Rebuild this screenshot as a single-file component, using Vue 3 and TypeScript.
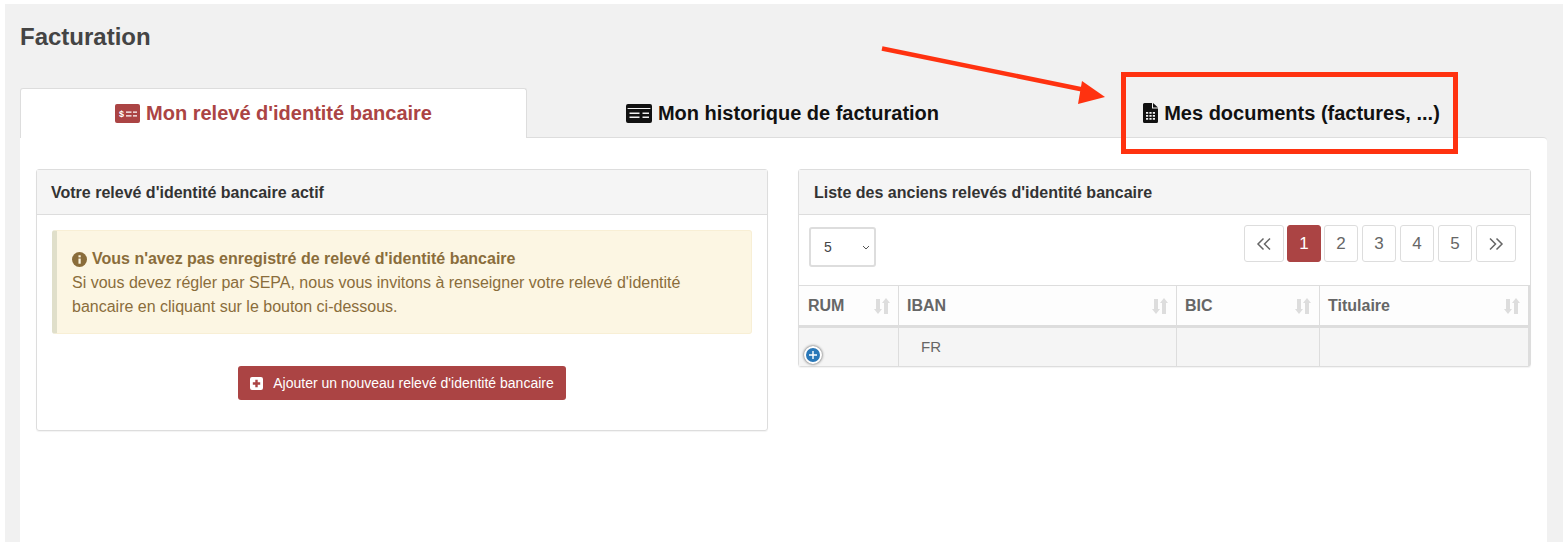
<script setup lang="ts">
interface Column { label: string; cls: string; value: string }
const columns: Column[] = [
  { label: 'RUM', cls: 'c-rum', value: '' },
  { label: 'IBAN', cls: 'c-iban', value: 'FR' },
  { label: 'BIC', cls: 'c-bic', value: '' },
  { label: 'Titulaire', cls: 'c-tit', value: '' },
]
const pages = [1, 2, 3, 4, 5]
</script>

<template>
  <div class="page">
    <main class="shell">
      <h1 class="title">Facturation</h1>

      <nav class="tabs">
        <a class="tab active">
          <svg class="ico" width="25" height="19" viewBox="0 0 25 19">
            <path fill="currentColor" d="M2 0h21a2 2 0 0 1 2 2v15a2 2 0 0 1-2 2H2a2 2 0 0 1-2-2V2a2 2 0 0 1 2-2z" />
            <path fill="none" stroke="#fff" stroke-width="1.3" d="M11 8.2h5.500M18 8.2h4M11 11.8h5.500M18 11.8h4" />
            <text x="4" y="13" class="dollar">$</text>
          </svg>
          Mon relevé d'identité bancaire
        </a>
        <a class="tab">
          <svg class="ico" width="26" height="19" viewBox="0 0 26 19">
            <path fill="currentColor" fill-rule="evenodd" d="M2 0h22a2 2 0 0 1 2 2v15a2 2 0 0 1-2 2H2a2 2 0 0 1-2-2V2a2 2 0 0 1 2-2zM1.600 4v.9h22.800V4zM3.500 8.500v1.600h10V8.500zM3.500 12.500v1.600h10v-1.600zM16.500 8.500v1.600h6.500V8.500zM16.500 12.500v1.600h6.500v-1.600z" />
          </svg>
          Mon historique de facturation
        </a>
        <a class="tab">
          <svg class="ico" width="15" height="20" viewBox="0 0 15 20">
            <path fill="currentColor" fill-rule="evenodd" d="M1.500 0H9v5.500h6v13a1.500 1.500 0 0 1-1.500 1.500h-12A1.500 1.500 0 0 1 0 18.500v-17A1.500 1.500 0 0 1 1.500 0zM3 9v1.800h2.200V9zM6.400 9v1.800h2.200V9zM9.800 9v1.800H12V9zM3 12v1.800h2.200V12zM6.400 12v1.800h2.200V12zM9.800 12v1.800H12V12zM3 15v1.800h2.200V15zM6.400 15v1.800h2.200V15zM9.800 15v1.800H12V15z" />
            <path fill="currentColor" d="M10 0l5 4.600h-5z" />
          </svg>
          Mes documents (factures, ...)
        </a>
      </nav>

      <section class="content">
        <article class="panel">
          <header class="panel-head">Votre relevé d'identité bancaire actif</header>
          <div class="panel-body">
            <div class="alert">
              <strong class="alert-title">
                <svg width="15" height="15" viewBox="0 0 16 16">
                  <circle cx="8" cy="8" r="8" fill="currentColor" />
                  <rect x="6.900" y="7" width="2.400" height="5.500" fill="#fcf6e3" />
                  <rect x="6.900" y="3.500" width="2.400" height="2.200" fill="#fcf6e3" />
                </svg>
                Vous n'avez pas enregistré de relevé d'identité bancaire
              </strong>
              <p>Si vous devez régler par SEPA, nous vous invitons à renseigner votre relevé d'identité bancaire en cliquant sur le bouton ci-dessous.</p>
            </div>
            <div class="action">
              <button class="add" type="button">
                <svg width="13" height="13" viewBox="0 0 13 13">
                  <path fill="#fff" fill-rule="evenodd" d="M2 0h9a2 2 0 0 1 2 2v9a2 2 0 0 1-2 2H2a2 2 0 0 1-2-2V2a2 2 0 0 1 2-2zM5.300 2.800v2.500H2.800v2.400h2.500v2.500h2.400V7.700h2.500V5.300H7.700V2.800z" />
                </svg>
                Ajouter un nouveau relevé d'identité bancaire
              </button>
            </div>
          </div>
        </article>

        <article class="panel panel-list">
          <header class="panel-head">Liste des anciens relevés d'identité bancaire</header>
          <div class="toolbar">
            <div class="select">
              <span>5</span>
              <svg width="8" height="5" viewBox="0 0 8 5"><path d="M1 1l3 3 3-3" fill="none" stroke="#555" stroke-width="1" /></svg>
            </div>
            <div class="pager">
              <a class="pg pg-wide">
                <svg width="16" height="14" viewBox="0 0 16 13"><path d="M7.500 1L2 6.500 7.500 12M14 1L8.500 6.500 14 12" fill="none" stroke="#666" stroke-width="1.500" /></svg>
              </a>
              <a v-for="p in pages" :key="p" class="pg" :class="{ current: p === 1 }">{{ p }}</a>
              <a class="pg pg-wide">
                <svg width="16" height="14" viewBox="0 0 16 13"><path d="M2 1l5.500 5.500L2 12M8.500 1L14 6.500 8.500 12" fill="none" stroke="#666" stroke-width="1.500" /></svg>
              </a>
            </div>
          </div>
          <div class="table">
            <div class="row head">
              <div v-for="c in columns" :key="c.label" class="cell" :class="c.cls">
                <span>{{ c.label }}</span>
                <svg class="sort" width="16" height="16" viewBox="0 0 16 16">
                  <path fill="#ddd" d="M2 1h4v10h2l-4 5-4-5h2zM10 16h4V5h2l-4-5-4 5h2z" />
                </svg>
              </div>
            </div>
            <div class="row body">
              <div v-for="c in columns" :key="c.label" class="cell" :class="c.cls">{{ c.value }}</div>
              <span class="expand">
                <svg width="10" height="10" viewBox="0 0 10 10"><path d="M5 1v8M1 5h8" stroke="#fff" stroke-width="1.400" /></svg>
              </span>
            </div>
          </div>
        </article>
      </section>

      <svg class="annotation" width="1563" height="542" viewBox="0 0 1563 542">
        <path d="M882 48.500L1085 90" stroke="#ff3210" stroke-width="4.500" fill="none" />
        <path d="M1082 81L1105 97 1078 104z" fill="#ff3210" />
        <rect x="1123.500" y="74.500" width="332" height="77" fill="none" stroke="#ff3210" stroke-width="5" />
      </svg>
    </main>
  </div>
</template>

<style>
html, body { margin: 0; background: #fff; }
</style>

<style scoped>
.page {
  height: 542px;
  overflow: hidden;
  padding: 4px 0 0 5px;
  box-sizing: border-box;
  font-family: "Liberation Sans", Arial, sans-serif;
  position: relative;
}
.shell {
  height: 538px;
  background: #f1f1f1;
  padding: 0 16px 0 15px;
  box-sizing: border-box;
  display: flex;
  flex-direction: column;
}
.title {
  margin: 0;
  padding-top: 19px;
  height: 84px;
  flex: none;
  box-sizing: border-box;
  font-size: 24px;
  line-height: 28px;
  font-weight: 700;
  color: #444;
}
.tabs { display: flex; height: 50px; flex: none; position: relative; z-index: 1; }
.tab {
  width: 507px;
  flex: none;
  margin-right: 2px;
  display: flex;
  align-items: center;
  justify-content: center;
  gap: 6px;
  box-sizing: border-box;
  font-size: 20px;
  font-weight: 700;
  color: #111;
  white-space: nowrap;
}
.tab.active {
  background: #fff;
  color: #ab4444;
  border: 1px solid #ddd;
  border-bottom: 0;
  border-radius: 3px 3px 0 0;
  padding-bottom: 1px;
}
.content {
  flex: 1;
  background: #fff;
  border-top: 1px solid #ddd;
  margin-top: -1px;
  padding: 31px 16px 0;
  display: flex;
  align-items: flex-start;
  justify-content: space-between;
  border-radius: 0 4px 0 0;
}
.panel {
  width: 732px;
  box-sizing: border-box;
  border: 1px solid #ddd;
  border-radius: 3px;
  height: 262px;
  box-shadow: 0 1px 1px rgba(0, 0, 0, .05);
}
.panel-list { width: 733px; height: 198px; }
.panel-head {
  height: 44px;
  line-height: 45px;
  padding-left: 14px;
  background: #f5f5f5;
  border-bottom: 1px solid #ddd;
  font-size: 16px;
  font-weight: 700;
  color: #333;
}
.panel-list .panel-head { padding-left: 15px; }
.panel-body { padding: 15px; }
.alert {
  height: 104px;
  box-sizing: border-box;
  padding: 16px 15px 0 15px;
  background: #fcf6e3;
  border: 1px solid #f8efd5;
  border-left: 5px solid #e0dfca;
  border-radius: 3px;
  color: #8a6d3b;
  font-size: 16px;
  line-height: 24px;
}
.alert-title { display: flex; align-items: center; gap: 5px; }
.alert p { margin: 0; }
.action { display: flex; justify-content: center; padding-top: 32px; }
.add {
  width: 328px;
  height: 34px;
  border: 0;
  border-radius: 3px;
  background: #ab4444;
  color: #fff;
  font: 14px/34px "Liberation Sans", Arial, sans-serif;
  display: flex;
  align-items: center;
  justify-content: center;
  gap: 10px;
  padding: 0;
}
.toolbar {
  height: 70px;
  box-sizing: border-box;
  padding: 10px 14px 0 10px;
  display: flex;
  justify-content: space-between;
  align-items: flex-start;
}
.select {
  width: 67px;
  height: 40px;
  margin-top: 2px;
  box-sizing: border-box;
  border: 2px solid #ddd;
  border-radius: 3px;
  display: flex;
  align-items: center;
  justify-content: space-between;
  padding: 0 4px 0 13px;
  font-size: 14px;
  color: #444;
}
.pager { display: flex; gap: 4px; }
.pg {
  width: 34px;
  height: 37px;
  box-sizing: border-box;
  border: 1px solid #ddd;
  border-radius: 3px;
  display: flex;
  align-items: center;
  justify-content: center;
  font-size: 17px;
  color: #666;
}
.pg-wide { width: 40px; }
.pg.current { background: #ab4444; border-color: #ab4444; color: #fff; margin-right: -1px; }
.pg-wide:first-child { margin-right: -1px; }
.table { position: relative; padding-right: 1px; }
.row { display: flex; position: relative; }
.head {
  height: 39px;
  background: #fdfdfd;
  border-top: 1px solid #ddd;
  border-bottom: 3px solid #ddd;
  border-right: 2px solid #ddd;
  margin-right: -1px;
}
.body {
  height: 38px;
  background: #f5f5f5;
  border-right: 2px solid #ddd;
  margin-right: -1px;
}
.cell {
  box-sizing: border-box;
  border-right: 1px solid #ddd;
  display: flex;
  align-items: center;
  justify-content: space-between;
  padding: 0 2px 0 8px;
  font-size: 16px;
  color: #666;
}
.head .c-rum { padding-left: 9px; }
.head .cell { font-weight: 700; color: #666; }
.body .cell { padding: 10px 0 0 22px; font-size: 15px; align-items: flex-start; line-height: 17px; }
.c-rum { width: 100px; }
.c-iban { width: 278px; }
.c-bic { width: 143px; }
.c-tit { flex: 1; border-right: 0; }
.sort { margin-right: 6px; }
.expand {
  position: absolute;
  left: 5px;
  top: 18px;
  width: 14px;
  height: 14px;
  border: 2px solid #fff;
  border-radius: 50%;
  background: #2a78b8;
  box-shadow: 0 0 3px #444;
  display: flex;
  align-items: center;
  justify-content: center;
}
.dollar { font: 700 9px "Liberation Sans", Arial, sans-serif; fill: #fff; }
.annotation { position: absolute; left: 0; top: 0; pointer-events: none; z-index: 2; }
</style>
